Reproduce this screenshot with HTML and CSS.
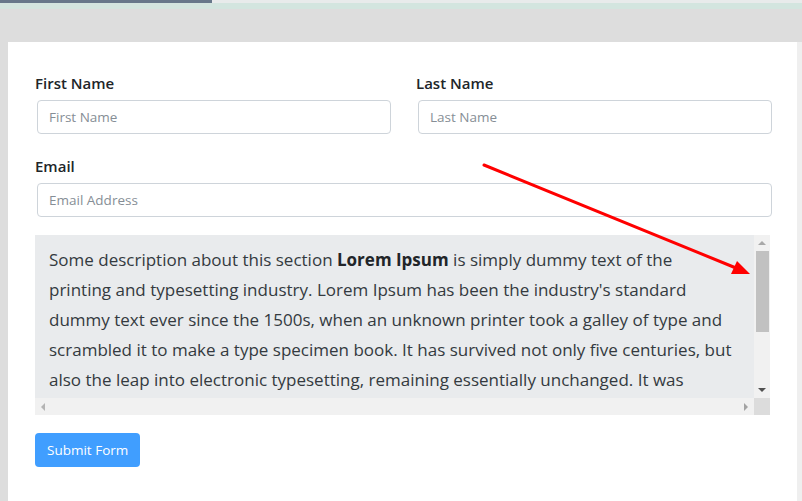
FILE: index.html
```html
<!DOCTYPE html>
<html lang="en">
<head>
<meta charset="utf-8">
<title>Form</title>
<link rel="stylesheet" href="styles.css">
</head>
<body>
<div class="topbar"><div class="topbar-progress"></div><div class="topbar-rest"></div></div>
<div class="greenbar"></div>
<div class="gap"></div>
<div class="main">
  <div class="card">
    <div class="row two">
      <div class="field">
        <label class="label">First Name</label>
        <input class="input" type="text" placeholder="First Name">
      </div>
      <div class="field">
        <label class="label">Last Name</label>
        <input class="input" type="text" placeholder="Last Name">
      </div>
    </div>
    <div class="row">
      <div class="field">
        <label class="label">Email</label>
        <input class="input" type="text" placeholder="Email Address">
      </div>
    </div>
    <div class="desc">
      <div class="desc-content">
        <p class="desc-text">Some description about this section <b>Lorem Ipsum</b> is simply dummy text of the<br>printing and typesetting industry. Lorem Ipsum has been the industry's standard<br>dummy text ever since the 1500s, when an unknown printer took a galley of type and<br>scrambled it to make a type specimen book. It has survived not only five centuries, but<br>also the leap into electronic typesetting, remaining essentially unchanged. It was</p>
      </div>
      <div class="vbar">
        <span class="arr arr-up"></span>
        <span class="vthumb"></span>
        <span class="vspace"></span>
        <span class="arr arr-down"></span>
      </div>
      <div class="hbar">
        <span class="arr arr-left"></span>
        <span class="arr arr-right"></span>
      </div>
      <div class="corner"></div>
    </div>
    <button class="btn" type="button">Submit Form</button>
  </div>
  <div class="edge"></div>
</div>
<svg class="annot" width="802" height="501" viewBox="0 0 802 501">
  <line x1="484" y1="165" x2="736" y2="268" stroke="#ff0000" stroke-width="3" stroke-linecap="round"/>
  <polygon points="750,274 731,274 737,261" fill="#ff0000"/>
</svg>
</body>
</html>
```

FILE: styles.css
```css
html, body {
  margin: 0;
  padding: 0;
}
body {
  background: #dddddd;
  font-family: "Open Sans", "Noto Sans", sans-serif;
  color: #212529;
  height: 501px;
  overflow: hidden;
  position: relative;
}
.topbar {
  display: flex;
  height: 3px;
}
.topbar-progress {
  width: 212px;
  background: #67788a;
}
.topbar-rest {
  flex: 1;
  background: #e8ebeb;
}
.greenbar {
  height: 6px;
  background: #d3e5df;
}
.gap {
  height: 33px;
}
.main {
  display: flex;
  padding-left: 8px;
  height: 459px;
}
.card {
  width: 789px;
  background: #ffffff;
  box-sizing: border-box;
  padding: 31px 27px 0 27px;
}
.edge {
  flex: 1;
  background: #efefef;
}
.row {
  margin-bottom: 22px;
}
.row.two {
  display: grid;
  grid-template-columns: 1fr 1fr;
  column-gap: 27px;
}
.field {
  display: flex;
  flex-direction: column;
}
.label {
  font-weight: 600;
  font-size: 15px;
  line-height: 20px;
  margin-bottom: 7px;
  color: #212529;
}
.input {
  box-sizing: border-box;
  height: 34px;
  margin-left: 2px;
  width: 100%;
  border: 1px solid #ced4da;
  border-radius: 4px;
  padding: 0 11px;
  font-family: inherit;
  font-size: 13.5px;
  color: #495057;
  background: #fff;
  outline: none;
}
.input::placeholder {
  color: #868e96;
}
.desc {
  margin-top: -4px;
  display: grid;
  grid-template-columns: 1fr 16px;
  grid-template-rows: 163px 17px;
  height: 180px;
}
.desc-content {
  background: #e9ebed;
  overflow: hidden;
  padding: 10px 14px 0 14px;
}
.desc-text {
  margin: 0;
  white-space: nowrap;
  font-size: 17px;
  line-height: 30px;
  color: #343a40;
}
.desc-text b {
  color: #212529;
  font-weight: 700;
}
.vbar {
  background: #f1f1f1;
  display: flex;
  flex-direction: column;
  align-items: center;
}
.vthumb {
  width: 13px;
  height: 81px;
  background: #c1c1c1;
  margin-left: 1px;
}
.vspace {
  flex: 1;
}
.arr {
  width: 0;
  height: 0;
  border-style: solid;
  display: block;
}
.arr-up {
  margin: 6px 0 6px;
  border-width: 0 4px 4px 4px;
  border-color: transparent transparent #a8a8a8 transparent;
}
.arr-down {
  margin: 0 0 6px;
  border-width: 4px 4px 0 4px;
  border-color: #505050 transparent transparent transparent;
}
.hbar {
  background: #f1f1f1;
  display: flex;
  align-items: center;
  justify-content: space-between;
  padding: 0 6px;
}
.arr-left {
  border-width: 4px 4px 4px 0;
  border-color: transparent #b4b4b4 transparent transparent;
}
.arr-right {
  border-width: 4px 0 4px 4px;
  border-color: transparent transparent transparent #a3a3a3;
}
.corner {
  background: #dcdcdc;
}
.btn {
  margin-top: 18px;
  height: 34px;
  padding: 0 12px;
  border: none;
  border-radius: 4px;
  background: #409eff;
  color: #ffffff;
  font-family: inherit;
  font-size: 13.5px;
}
.annot {
  position: absolute;
  left: 0;
  top: 0;
  pointer-events: none;
}
```
